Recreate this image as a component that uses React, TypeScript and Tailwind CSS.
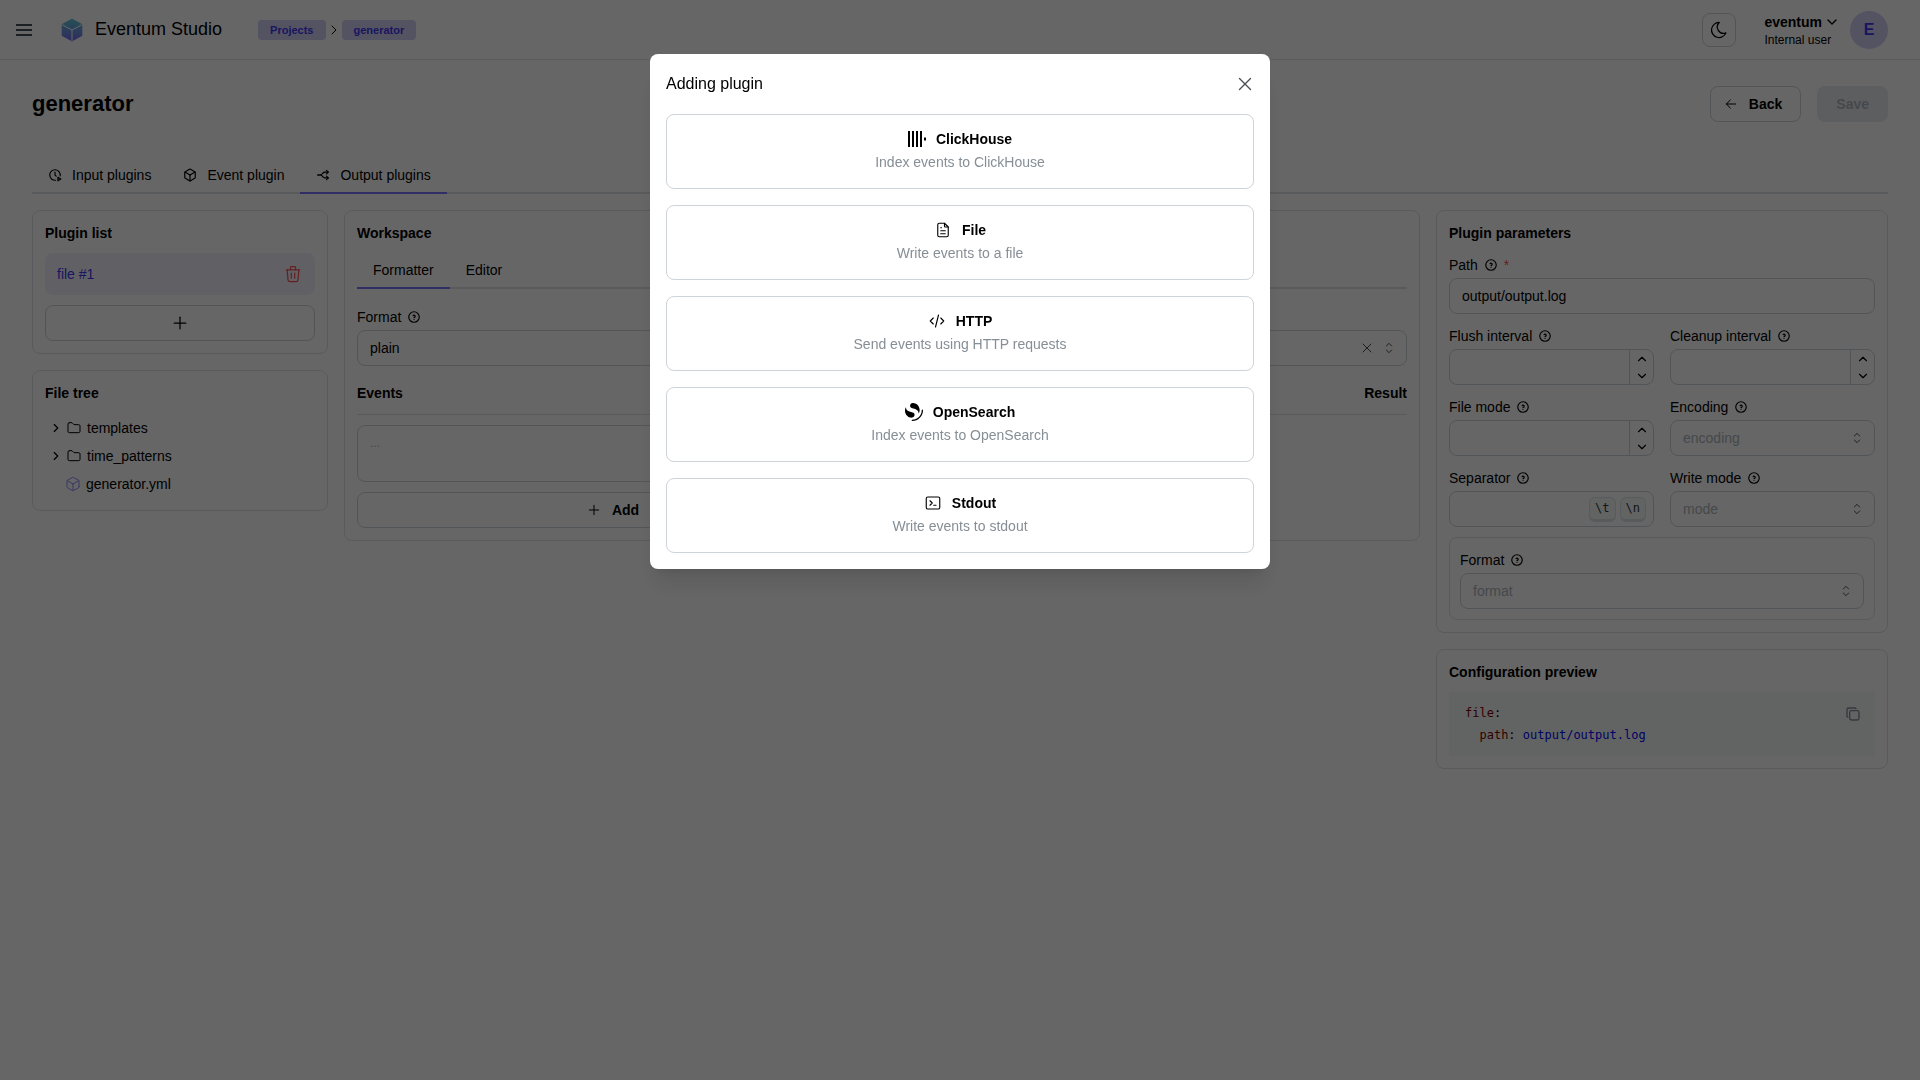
import { useId, type ReactNode } from 'react';
import {
  TbArrowLeft,
  TbArrowsSplit2,
  TbChevronDown,
  TbChevronRight,
  TbChevronUp,
  TbClockPlay,
  TbCode,
  TbCopy,
  TbCube,
  TbFileText,
  TbFolder,
  TbHelpCircle,
  TbMoon,
  TbPlus,
  TbSelector,
  TbTerminal2,
  TbTrash,
  TbX,
} from 'react-icons/tb';
import { SiClickhouse, SiOpensearch } from 'react-icons/si';

const plugins = [
  { name: 'ClickHouse', description: 'Index events to ClickHouse', icon: <SiClickhouse size={18} /> },
  { name: 'File', description: 'Write events to a file', icon: <TbFileText size={18} strokeWidth={1.5} /> },
  { name: 'HTTP', description: 'Send events using HTTP requests', icon: <TbCode size={18} strokeWidth={1.5} /> },
  { name: 'OpenSearch', description: 'Index events to OpenSearch', icon: <SiOpensearch size={18} /> },
  { name: 'Stdout', description: 'Write events to stdout', icon: <TbTerminal2 size={18} strokeWidth={1.5} /> },
];

const tabs = [
  { label: 'Input plugins', icon: <TbClockPlay size={14} />, active: false },
  { label: 'Event plugin', icon: <TbCube size={14} />, active: false },
  { label: 'Output plugins', icon: <TbArrowsSplit2 size={14} />, active: true },
];

const Logo = () => (
  <svg width="22" height="24" viewBox="0 0 22 24" aria-hidden="true">
    <defs>
      <linearGradient id="logo-fill" x1="0" y1="0" x2="0" y2="1">
        <stop offset="0" stopColor="#5ecbd3" />
        <stop offset="1" stopColor="#7a6cf0" />
      </linearGradient>
    </defs>
    <path d="M11 0.5 21.3 6.2V17.8L11 23.5 0.7 17.8V6.2Z" fill="url(#logo-fill)" />
    <path d="M1 6.6 11 12 21 6.6M11 12V23" fill="none" stroke="#fff" strokeWidth="1" />
  </svg>
);

const Card = ({ title, children }: { title: string; children: ReactNode }) => (
  <section className="rounded-lg border border-[#dee2e6] bg-white p-3">
    <h2 className="mb-2.5 leading-5 font-bold">{title}</h2>
    {children}
  </section>
);

type LabelProps = { id: string; label: string; required?: boolean };

const Label = ({ id, label, required }: LabelProps) => (
  <label htmlFor={id} className="flex h-[25px] items-center gap-1.5 pb-0.5">
    {label}
    <TbHelpCircle size={14} />
    {required && <span className="text-[#fa5252]">*</span>}
  </label>
);

const TextField = ({ label, value, required }: { label: string; value: string; required?: boolean }) => {
  const id = useId();
  return (
    <div>
      <Label id={id} label={label} required={required} />
      <input
        id={id}
        type="text"
        defaultValue={value}
        className="h-9 w-full rounded-lg border border-[#ced4da] bg-white px-3"
      />
    </div>
  );
};

const NumberField = ({ label }: { label: string }) => {
  const id = useId();
  return (
    <div>
      <Label id={id} label={label} />
      <div className="flex h-9 overflow-hidden rounded-lg border border-[#ced4da] bg-white">
        <input id={id} type="text" inputMode="numeric" className="min-w-0 flex-1 px-3" />
        <div className="flex w-6 flex-col border-l border-[#ced4da]">
          <button type="button" aria-label="Increase" className="flex flex-1 items-center justify-center">
            <TbChevronUp size={14} />
          </button>
          <button type="button" aria-label="Decrease" className="flex flex-1 items-center justify-center">
            <TbChevronDown size={14} />
          </button>
        </div>
      </div>
    </div>
  );
};

type SelectFieldProps = { label: string; value?: string; placeholder?: string; clearable?: boolean };

const SelectField = ({ label, value, placeholder, clearable }: SelectFieldProps) => {
  const id = useId();
  return (
    <div>
      <Label id={id} label={label} />
      <div className="relative">
        <select
          id={id}
          className={`h-9 w-full appearance-none rounded-lg border border-[#ced4da] bg-white px-3 ${
            value ? 'text-black' : 'text-[#adb5bd]'
          }`}
        >
          <option>{value ?? placeholder}</option>
        </select>
        <div className="pointer-events-none absolute inset-y-0 right-2.5 flex items-center gap-1.5 text-[#495057]">
          {clearable && <TbX size={16} strokeWidth={1.5} />}
          <TbSelector size={16} strokeWidth={1.5} />
        </div>
      </div>
    </div>
  );
};

const SeparatorField = () => {
  const id = useId();
  return (
    <div>
      <Label id={id} label="Separator" />
      <div className="flex h-9 items-center gap-1 rounded-lg border border-[#ced4da] bg-white pr-[7px]">
        <input id={id} type="text" className="min-w-0 flex-1 px-3" />
        {['\\t', '\\n'].map((key) => (
          <button
            key={key}
            type="button"
            className="h-[25px] rounded-md border border-b-3 border-[#dee2e6] bg-[#f6faf8] px-[5px] font-['DejaVu_Sans_Mono',monospace] text-xs leading-5 text-[#343a40]"
          >
            {key}
          </button>
        ))}
      </div>
    </div>
  );
};

const Header = () => (
  <header className="flex h-[60px] items-center border-b border-[#dee2e6] pr-8 pl-4">
    <button type="button" aria-label="Toggle menu" className="flex w-4 flex-col gap-[3px]">
      <span className="h-0.5 bg-[#495057]" />
      <span className="h-0.5 bg-[#495057]" />
      <span className="h-0.5 bg-[#495057]" />
    </button>
    <a href="#home" className="ml-[29px] flex items-center gap-3 text-lg leading-6">
      <Logo />
      <span className="pb-0.5">Eventum Studio</span>
    </a>
    <nav className="ml-9 flex items-center text-[11px] leading-5 font-bold text-[#4038f0]">
      <a href="#projects" className="rounded bg-[#d3cff5] px-3">
        Projects
      </a>
      <TbChevronRight size={16} strokeWidth={1.5} className="text-black" />
      <a href="#generator" className="rounded bg-[#d3cff5] px-3">
        generator
      </a>
    </nav>
    <button
      type="button"
      aria-label="Toggle color scheme"
      className="ml-auto flex size-[34px] items-center justify-center rounded-lg border border-[#ced4da]"
    >
      <TbMoon size={20} strokeWidth={1.5} />
    </button>
    <button type="button" className="ml-7 flex items-center gap-2.5 text-left">
      <span>
        <span className="flex items-center gap-0.5 leading-5 font-bold">
          eventum
          <TbChevronDown size={16} />
        </span>
        <span className="block text-xs leading-4">Internal user</span>
      </span>
      <span className="flex size-[38px] items-center justify-center rounded-full bg-[#d3cff5] text-base font-bold text-[#4038f0]">
        E
      </span>
    </button>
  </header>
);

const PluginList = () => (
  <Card title="Plugin list">
    <div className="flex h-[42px] items-center justify-between rounded-lg bg-[#f2f0fc] px-3 text-[#4038f0]">
      <button type="button">file #1</button>
      <button type="button" aria-label="Remove plugin" className="text-[#fa5252]">
        <TbTrash size={20} strokeWidth={1.5} />
      </button>
    </div>
    <button
      type="button"
      aria-label="Add plugin"
      className="mt-2.5 flex h-9 w-full items-center justify-center rounded-lg border border-[#ced4da]"
    >
      <TbPlus size={20} strokeWidth={1.5} />
    </button>
  </Card>
);

const FileTree = () => (
  <Card title="File tree">
    <ul className="pt-px pl-1 leading-7">
      {['templates', 'time_patterns'].map((name) => (
        <li key={name} className="flex items-center">
          <TbChevronRight size={14} />
          <TbFolder size={16} strokeWidth={1.5} className="mr-[5px] ml-[3px]" />
          {name}
        </li>
      ))}
      <li className="flex items-center pl-4">
        <TbCube size={16} strokeWidth={1.5} className="mr-[5px] text-[#8f88ff]" />
        generator.yml
      </li>
    </ul>
  </Card>
);

const Workspace = () => (
  <Card title="Workspace">
    <div role="tablist" className="flex border-b-2 border-[#dee2e6] leading-[14px]">
      <button type="button" role="tab" aria-selected className="-mb-0.5 border-b-2 border-[#7c74ff] px-4 py-2.5">
        Formatter
      </button>
      <button type="button" role="tab" className="-mb-0.5 border-b-2 border-transparent px-4 py-2.5">
        Editor
      </button>
    </div>
    <div className="pt-4">
      <SelectField label="Format" value="plain" clearable />
      <div className="mt-4 flex justify-between border-b border-[#dee2e6] pb-2.5 font-bold">
        <label htmlFor="events">Events</label>
        <h3>Result</h3>
      </div>
      <div className="mt-2.5 grid grid-cols-2 gap-4">
        <div>
          <textarea
            id="events"
            placeholder="..."
            className="block h-[57px] w-full resize-none rounded-lg border border-[#ced4da] px-3 py-1.5 text-xs leading-[22px] placeholder:text-[#adb5bd]"
          />
          <button
            type="button"
            className="mt-2.5 flex h-9 w-full items-center justify-center gap-2.5 rounded-lg border border-[#ced4da] pr-1.5 font-bold"
          >
            <TbPlus size={16} strokeWidth={1.5} />
            Add
          </button>
        </div>
      </div>
    </div>
  </Card>
);

const PluginParameters = () => (
  <Card title="Plugin parameters">
    <div className="flex flex-col gap-2.5">
      <TextField label="Path" value="output/output.log" required />
      <div className="grid grid-cols-2 gap-x-4 gap-y-2.5">
        <NumberField label="Flush interval" />
        <NumberField label="Cleanup interval" />
        <NumberField label="File mode" />
        <SelectField label="Encoding" placeholder="encoding" />
        <SeparatorField />
        <SelectField label="Write mode" placeholder="mode" />
      </div>
      <div className="rounded-lg border border-[#dee2e6] p-2.5">
        <SelectField label="Format" placeholder="format" />
      </div>
    </div>
  </Card>
);

const ConfigurationPreview = () => (
  <Card title="Configuration preview">
    <div className="flex items-start justify-between bg-[#f6faf8] px-4 py-2.5">
      <pre className="font-['DejaVu_Sans_Mono',monospace] text-xs leading-[22px]">
        <span className="text-[#800000]">file</span>:{'\n  '}
        <span className="text-[#800000]">path</span>: <span className="text-[#0000ff]">output/output.log</span>
      </pre>
      <button type="button" aria-label="Copy" className="mt-1 -mr-0.5 text-[#868e96]">
        <TbCopy size={16} />
      </button>
    </div>
  </Card>
);

const AddPluginModal = () => (
  <div className="fixed inset-0 flex items-start justify-center bg-black/60 pt-[5vh]">
    <div
      role="dialog"
      aria-modal="true"
      aria-labelledby="modal-title"
      className="w-full max-w-[620px] rounded-lg bg-white px-4 pb-4 shadow-xl"
    >
      <div className="flex h-[60px] items-center justify-between">
        <h2 id="modal-title" className="text-base">
          Adding plugin
        </h2>
        <button type="button" aria-label="Close" className="-mr-0.5 text-[#495057]">
          <TbX size={22} strokeWidth={1.5} />
        </button>
      </div>
      <div className="flex flex-col gap-4">
        {plugins.map(({ name, description, icon }) => (
          <button key={name} type="button" className="rounded-lg border border-[#ced4da] pt-3 pb-[15px]">
            <span className="flex h-6 items-center justify-center gap-2.5 font-bold">
              {icon}
              {name}
            </span>
            <span className="block text-[#868e96]">{description}</span>
          </button>
        ))}
      </div>
    </div>
  </div>
);

const App = () => {
  return (
    <div className="min-h-screen bg-white font-['Liberation_Sans',Arial,sans-serif] text-sm leading-[22px] text-black">
      <Header />
      <main className="px-8 pt-[26px]">
        <div className="flex items-center gap-4">
          <h1 className="mr-auto text-[22px] font-bold">generator</h1>
          <button
            type="button"
            className="flex h-9 items-center gap-2.5 rounded-lg border border-[#ced4da] pr-[18px] pl-3 font-bold"
          >
            <TbArrowLeft size={16} strokeWidth={1.5} />
            Back
          </button>
          <button type="button" disabled className="h-9 rounded-lg bg-[#e9ecef] px-[19px] font-bold text-[#adb5bd]">
            Save
          </button>
        </div>
        <div role="tablist" className="mt-9 flex border-b-2 border-[#dee2e6] leading-[14px]">
          {tabs.map(({ label, icon, active }) => (
            <button
              key={label}
              type="button"
              role="tab"
              aria-selected={active}
              className={`-mb-0.5 flex items-center gap-2.5 border-b-2 px-4 py-2.5 ${
                active ? 'border-[#7c74ff]' : 'border-transparent'
              }`}
            >
              {icon}
              {label}
            </button>
          ))}
        </div>
        <div className="mt-4 grid grid-cols-12 items-start gap-4">
          <div className="col-span-2 flex flex-col gap-4">
            <PluginList />
            <FileTree />
          </div>
          <div className="col-span-7">
            <Workspace />
          </div>
          <div className="col-span-3 flex flex-col gap-4">
            <PluginParameters />
            <ConfigurationPreview />
          </div>
        </div>
      </main>
      <AddPluginModal />
    </div>
  );
};

export default App;
